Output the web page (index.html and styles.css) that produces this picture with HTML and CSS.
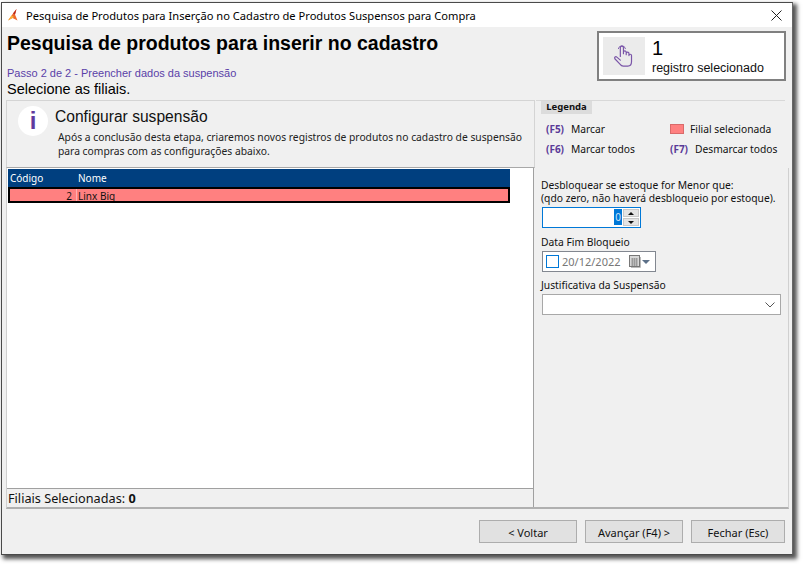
FILE: index.html
```html
<!DOCTYPE html>
<html lang="pt">
<head>
<meta charset="utf-8">
<title>Pesquisa de Produtos</title>
<link rel="stylesheet" href="styles.css">
</head>
<body>
<div class="window">
  <div class="titlebar">
    <svg class="app-icon" width="14" height="14" viewBox="0 0 14 14"><path d="M10.500 1 L7 5.500 L2 12.500 L6.500 10 L11.500 12.500 L9 6.500Z" fill="#ee6a2c"/><path d="M10.500 1 L7 5.500 L9 6.500Z" fill="#b8261a"/><path d="M2 12.500 L5.500 7.500 L8 9 L6.500 10Z" fill="#f7b23b"/></svg>
    <span class="title-text">Pesquisa de Produtos para Inserção no Cadastro de Produtos Suspensos para Compra</span>
    <svg class="close" width="11" height="11" viewBox="0 0 11 11"><path d="M.5.5l10 10M10.500.5l-10 10" stroke="#222" stroke-width="1" fill="none"/></svg>
  </div>
  <div class="body">
    <div class="head">
      <div class="head-text">
        <h1>Pesquisa de produtos para inserir no cadastro</h1>
        <div class="step">Passo 2 de 2 - Preencher dados da suspensão</div>
        <div class="select-hint">Selecione as filiais.</div>
      </div>
      <div class="counter">
        <div class="counter-icon">
          <svg width="22" height="26" viewBox="0 0 24 27" fill="none" stroke="#7a55a8" stroke-width="1.300" stroke-linejoin="round" stroke-linecap="round"><path d="M8 14V4.500a1.700 1.700 0 0 1 3.400 0V11l0-1.500a1.500 1.500 0 0 1 3 0V12l0-1.300a1.500 1.500 0 0 1 3 0V13a1.400 1.400 0 0 1 2.800 0v6.500c0 3-1.800 5-4 5h-5c-1.600 0-2.600-.8-3.600-2.200L2 16.500c-.9-1.300.8-3 2.200-1.800L8 18"/><path d="M5.800 5.500a4 4 0 0 1 7.800 0" stroke-width="1"/></svg>
        </div>
        <div class="counter-text">
          <div class="counter-num">1</div>
          <div class="counter-label">registro selecionado</div>
        </div>
      </div>
    </div>
    <div class="top-row">
      <div class="info">
        <div class="info-badge">i</div>
        <div class="info-text">
          <div class="info-title">Configurar suspensão</div>
          <p>Após a conclusão desta etapa, criaremos novos registros de produtos no cadastro de suspensão<br>para compras com as configurações abaixo.</p>
        </div>
      </div>
      <div class="legend">
        <div class="legend-tag">Legenda</div>
        <div class="legend-grid">
          <div class="legend-item"><b>(F5)</b><span>Marcar</span></div>
          <div class="legend-item"><i class="swatch"></i><span>Filial selecionada</span></div>
          <div class="legend-item"><b>(F6)</b><span>Marcar todos</span></div>
          <div class="legend-item"><b>(F7)</b><span>Desmarcar todos</span></div>
        </div>
      </div>
    </div>
    <div class="main">
      <div class="left">
        <div class="grid">
          <div class="grid-head"><span class="col-code">Código</span><span class="col-name">Nome</span></div>
          <div class="grid-row"><span class="cell-code">2</span><span class="cell-name">Linx Big</span></div>
        </div>
        <div class="status">Filiais Selecionadas: <b>0</b></div>
      </div>
      <div class="form">
        <label class="lbl">Desbloquear se estoque for Menor que:<br>(qdo zero, não haverá desbloqueio por estoque).</label>
        <div class="spin">
          <span class="spin-val"><span class="sel">0</span></span>
          <div class="spin-btns">
            <div class="spin-btn"><i class="tri-up"></i></div>
            <div class="spin-btn"><i class="tri-down"></i></div>
          </div>
        </div>
        <label class="lbl lbl-date">Data Fim Bloqueio</label>
        <div class="date">
          <i class="check"></i>
          <span class="date-val">20/12/2022</span>
          <svg class="cal" width="12" height="13" viewBox="0 0 12 13"><rect x=".5" y=".5" width="10" height="11" fill="#d8d8d8" stroke="#777"/><path d="M2 4h7M2 6h7M2 8h7M2 10h7M3.500 3v8M5.500 3v8M7.500 3v8" stroke="#9a9a9a"/><path d="M11.500 2v10.500H2" stroke="#bbb" fill="none"/></svg>
          <i class="date-arrow"></i>
        </div>
        <label class="lbl lbl-just">Justificativa da Suspensão</label>
        <div class="combo">
          <svg width="10" height="6" viewBox="0 0 10 6"><path d="M.5.5l4.500 4.500 4.500-4.500" stroke="#555" fill="none"/></svg>
        </div>
      </div>
    </div>
    <div class="footer">
      <button class="btn btn-a">&lt; Voltar</button>
      <button class="btn btn-a">Avançar (F4) &gt;</button>
      <button class="btn btn-b">Fechar (Esc)</button>
    </div>
  </div>
</div>
</body>
</html>
```
FILE: styles.css
```css
* { box-sizing: border-box; }
html, body { margin: 0; padding: 0; background: #fff; }
body { width: 803px; height: 564px; overflow: hidden; font-family: "Noto Sans", "Liberation Sans", sans-serif; font-size: 10.5px; color: #111; }
.window { margin: 2px 0 0 1px; width: 792px; height: 553px; border: 1px solid #4a4a4a; border-right-color: #666; background: #f0f0f0; display: flex; flex-direction: column; box-shadow: 3px 3px 4px 1px #555; }
.titlebar { height: 24px; flex: none; background: #fff; display: flex; align-items: center; padding: 0 10px 0 4px; }
.app-icon { flex: none; }
.title-text { margin-left: 6px; font-size: 11.13px; color: #000; flex: 1; white-space: nowrap; }
.close { flex: none; }
.body { flex: 1; display: flex; flex-direction: column; padding: 0 4px; min-height: 0; }
.head { display: flex; justify-content: space-between; height: 73px; flex: none; }
.head-text { padding: 4px 0 0 1px; font-family: "Liberation Sans", sans-serif; }
h1 { margin: 0; font-size: 19.5px; line-height: 24px; font-weight: 700; color: #000; }
.step { margin-top: 12px; font-size: 11px; line-height: 12px; color: #5a3fa8; }
.select-hint { margin-top: 2px; font-size: 14.5px; line-height: 17px; color: #000; }
.counter { width: 189px; height: 50px; margin: 4px 2px 0 0; border: 2px solid #808080; background: #fff; display: flex; padding: 4px; }
.counter-icon { width: 42px; height: 38px; background: #ebebeb; display: flex; align-items: center; justify-content: center; flex: none; }
.counter-text { margin-left: 7px; font-family: "Liberation Sans", sans-serif; }
.counter-num { font-size: 20px; line-height: 22px; color: #000; }
.counter-label { font-size: 12.5px; line-height: 15px; margin-top: 2px; color: #111; }
.top-row { display: flex; height: 68px; flex: none; }
.info { width: 529px; border: 1px solid #d4d4d4; border-bottom-color: #a8a8a8; padding: 0 0 0 11px; display: flex; }
.info-badge { width: 30px; height: 30px; margin-top: 5px; border-radius: 50%; background: #fff; color: #5f3a9e; font: 700 24px/30px "Liberation Sans", sans-serif; text-align: center; flex: none; }
.info-text { margin-left: 7px; }
.info-title { font-size: 15.6px; line-height: 20px; margin-top: 6px; font-family: "Liberation Sans", sans-serif; color: #111; }
.info p { margin: 3px 0 0 3px; font-size: 10.3px; line-height: 14px; color: #222; white-space: nowrap; }
.legend { flex: 1; margin-left: 1px; border-top: 1px solid #d8d8d8; margin-right: 3px; position: relative; }
.legend-tag { position: absolute; left: 5px; top: 0; width: 51px; height: 13px; background: #dcdcdc; font-size: 9.5px; font-weight: 700; line-height: 12px; text-align: center; }
.legend-grid { display: grid; grid-template-columns: 124px 1fr; grid-auto-rows: 20px; padding: 18px 0 0 10px; }
.legend-item { display: flex; align-items: center; white-space: nowrap; font-size: 10.25px; }
.legend-item b { color: #5a3a98; font-size: 10px; margin-right: 7px; }
.swatch { width: 14px; height: 10px; background: #ff8080; border: 1px solid #d96a6a; margin-right: 6px; }
.main { display: flex; height: 341px; flex: none; border: 1px solid #d0d0d0; border-top: 0; width: 783px; border-bottom: 2px solid #b0b0b0; }
.left { width: 527px; flex: none; display: flex; flex-direction: column; border-right: 1px solid #a0a0a0; }
.grid { flex: 1; background: #fff; border-bottom: 1px solid #a0a0a0; padding: 1px 0 0 1px; }
.grid-head { height: 18px; background: #003f7f; color: #fff; display: flex; align-items: center; font-size: 10px; width: 502px; }
.col-code { width: 70px; padding-left: 2px; }
.grid-row { height: 16px; background: #ff8080; border: 2px solid #000; display: flex; line-height: 15px; font-size: 10px; overflow: hidden; color: #111; width: 502px; }
.cell-code { width: 67px; text-align: right; border-right: 1px solid #ffb0b0; padding-right: 4px; }
.cell-name { padding-left: 1px; }
.status { height: 18px; flex: none; font-size: 12.7px; line-height: 18px; padding-left: 1px; color: #111; }
.form { flex: 1; padding: 11px 0 0 7px; display: flex; flex-direction: column; align-items: flex-start; }
.lbl { font-size: 10.3px; line-height: 13px; color: #111; white-space: nowrap; }
.spin { margin: 2px 0 0 1px; width: 99px; height: 21px; background: #fff; border: 1px solid #0078d7; display: flex; justify-content: flex-end; padding: 1px; }
.spin-val { flex: 1; text-align: right; font-size: 10px; line-height: 17px; padding-right: 1px; }
.sel { background: #0078d7; color: #cfe4f7; padding: 0 1px; display: inline-block; height: 16px; }
.spin-btns { width: 16px; display: flex; flex-direction: column; gap: 1px; flex: none; }
.spin-btn { flex: 1; background: #e4e4e4; border: 1px solid #c8c8c8; display: flex; align-items: center; justify-content: center; }
.tri-up { border: 3px solid transparent; border-top: 0; border-bottom: 3px solid #111; }
.tri-down { border: 3px solid transparent; border-bottom: 0; border-top: 3px solid #111; }
.lbl-date { margin-top: 8px; }
.date { margin: 2px 0 0 1px; width: 114px; height: 21px; background: #fff; border: 1px solid #828790; display: flex; align-items: center; padding-left: 3px; }
.check { width: 13px; height: 13px; border: 1px solid #0078d7; background: #fff; flex: none; }
.date-val { margin-left: 3px; font-size: 11px; color: #777; flex: none; width: 66px; white-space: nowrap; }
.cal { flex: none; margin-left: 1px; }
.date-arrow { margin-left: 1px; border: 4px solid transparent; border-bottom: 0; border-top: 4px solid #5c7088; flex: none; }
.lbl-just { margin-top: 7px; }
.combo { margin: 2px 0 0 1px; width: 239px; height: 21px; background: #fff; border: 1px solid #a8a8a8; display: flex; align-items: center; justify-content: flex-end; padding-right: 5px; }
.footer { display: flex; justify-content: flex-end; gap: 8px; flex: 1; align-items: flex-start; padding: 11px 3px 0 0; }
.btn { height: 23px; background: #e1e1e1; border: 1px solid #adadad; font: 11px/23px "Noto Sans", sans-serif; color: #111; padding: 0; }
.btn-a { width: 98px; }
.btn-b { width: 94px; }
```
